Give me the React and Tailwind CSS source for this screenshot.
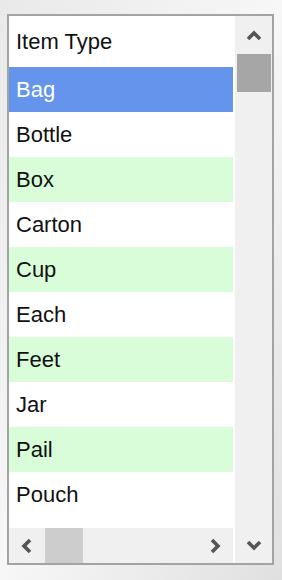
const items = ["Bag", "Bottle", "Box", "Carton", "Cup", "Each", "Feet", "Jar", "Pail", "Pouch"];

const Chevron = ({ dir }) => {
  const paths = {
    up: "M2 10 L8 4 L14 10",
    down: "M2 3 L8 9 L14 3",
    left: "M9 2 L3 8 L9 14",
    right: "M3 2 L9 8 L3 14",
  };
  const vertical = dir === "up" || dir === "down";
  return (
    <svg
      width={vertical ? 16 : 12}
      height={vertical ? 12 : 16}
      viewBox={vertical ? "0 0 16 12" : "0 0 12 16"}
      fill="none"
      stroke="#555"
      strokeWidth="3.6"
    >
      <path d={paths[dir]} />
    </svg>
  );
};

const Row = ({ label, index }) => {
  const selected = index === 0;
  const shaded = index % 2 === 0 && !selected;
  return (
    <div
      className={`h-[45px] mr-[2px] pl-[7px] flex items-center ${
        selected ? "bg-[#6494eb] text-white" : shaded ? "bg-[#d8fdd8] text-[#111]" : "bg-white text-[#111]"
      }`}
    >
      {label}
    </div>
  );
};

export default function App() {
  return (
    <div className="w-[282px] h-[580px] bg-gradient-to-br from-[#e9e9e9] via-[#f7f7f7] to-[#e0e0e0] pt-[14px] pl-[7px]">
      <div
        className="w-[267px] h-[551px] border-2 border-[#a3a3a3] bg-white flex text-[22px] leading-none"
        style={{ fontFamily: '"Liberation Sans", Arial, sans-serif' }}
      >
        {/* list column */}
        <div className="w-[226px] flex flex-col">
          <div className="h-[51px] pl-[7px] flex items-center text-[#111]">Item Type</div>
          {items.map((item, i) => (
            <Row key={item} label={item} index={i} />
          ))}
          <div className="h-[11px]" />
          {/* horizontal scrollbar */}
          <div className="h-[35px] mr-[2px] bg-[#f0f0f0] flex items-center">
            <div className="w-[36px] flex justify-center">
              <Chevron dir="left" />
            </div>
            <div className="w-[38px] h-full bg-[#cdcdcd]" />
            <div className="flex-1" />
            <div className="w-[36px] flex justify-center">
              <Chevron dir="right" />
            </div>
          </div>
        </div>

        {/* vertical scrollbar */}
        <div className="w-[37px] bg-[#f0f0f0] flex flex-col items-center">
          <div className="h-[38px] flex items-center justify-center">
            <Chevron dir="up" />
          </div>
          <div className="w-[34px] h-[38px] bg-[#a6a6a6]" />
          <div className="flex-1" />
          <div className="h-[36px] flex items-center justify-center">
            <Chevron dir="down" />
          </div>
        </div>
      </div>
    </div>
  );
}
